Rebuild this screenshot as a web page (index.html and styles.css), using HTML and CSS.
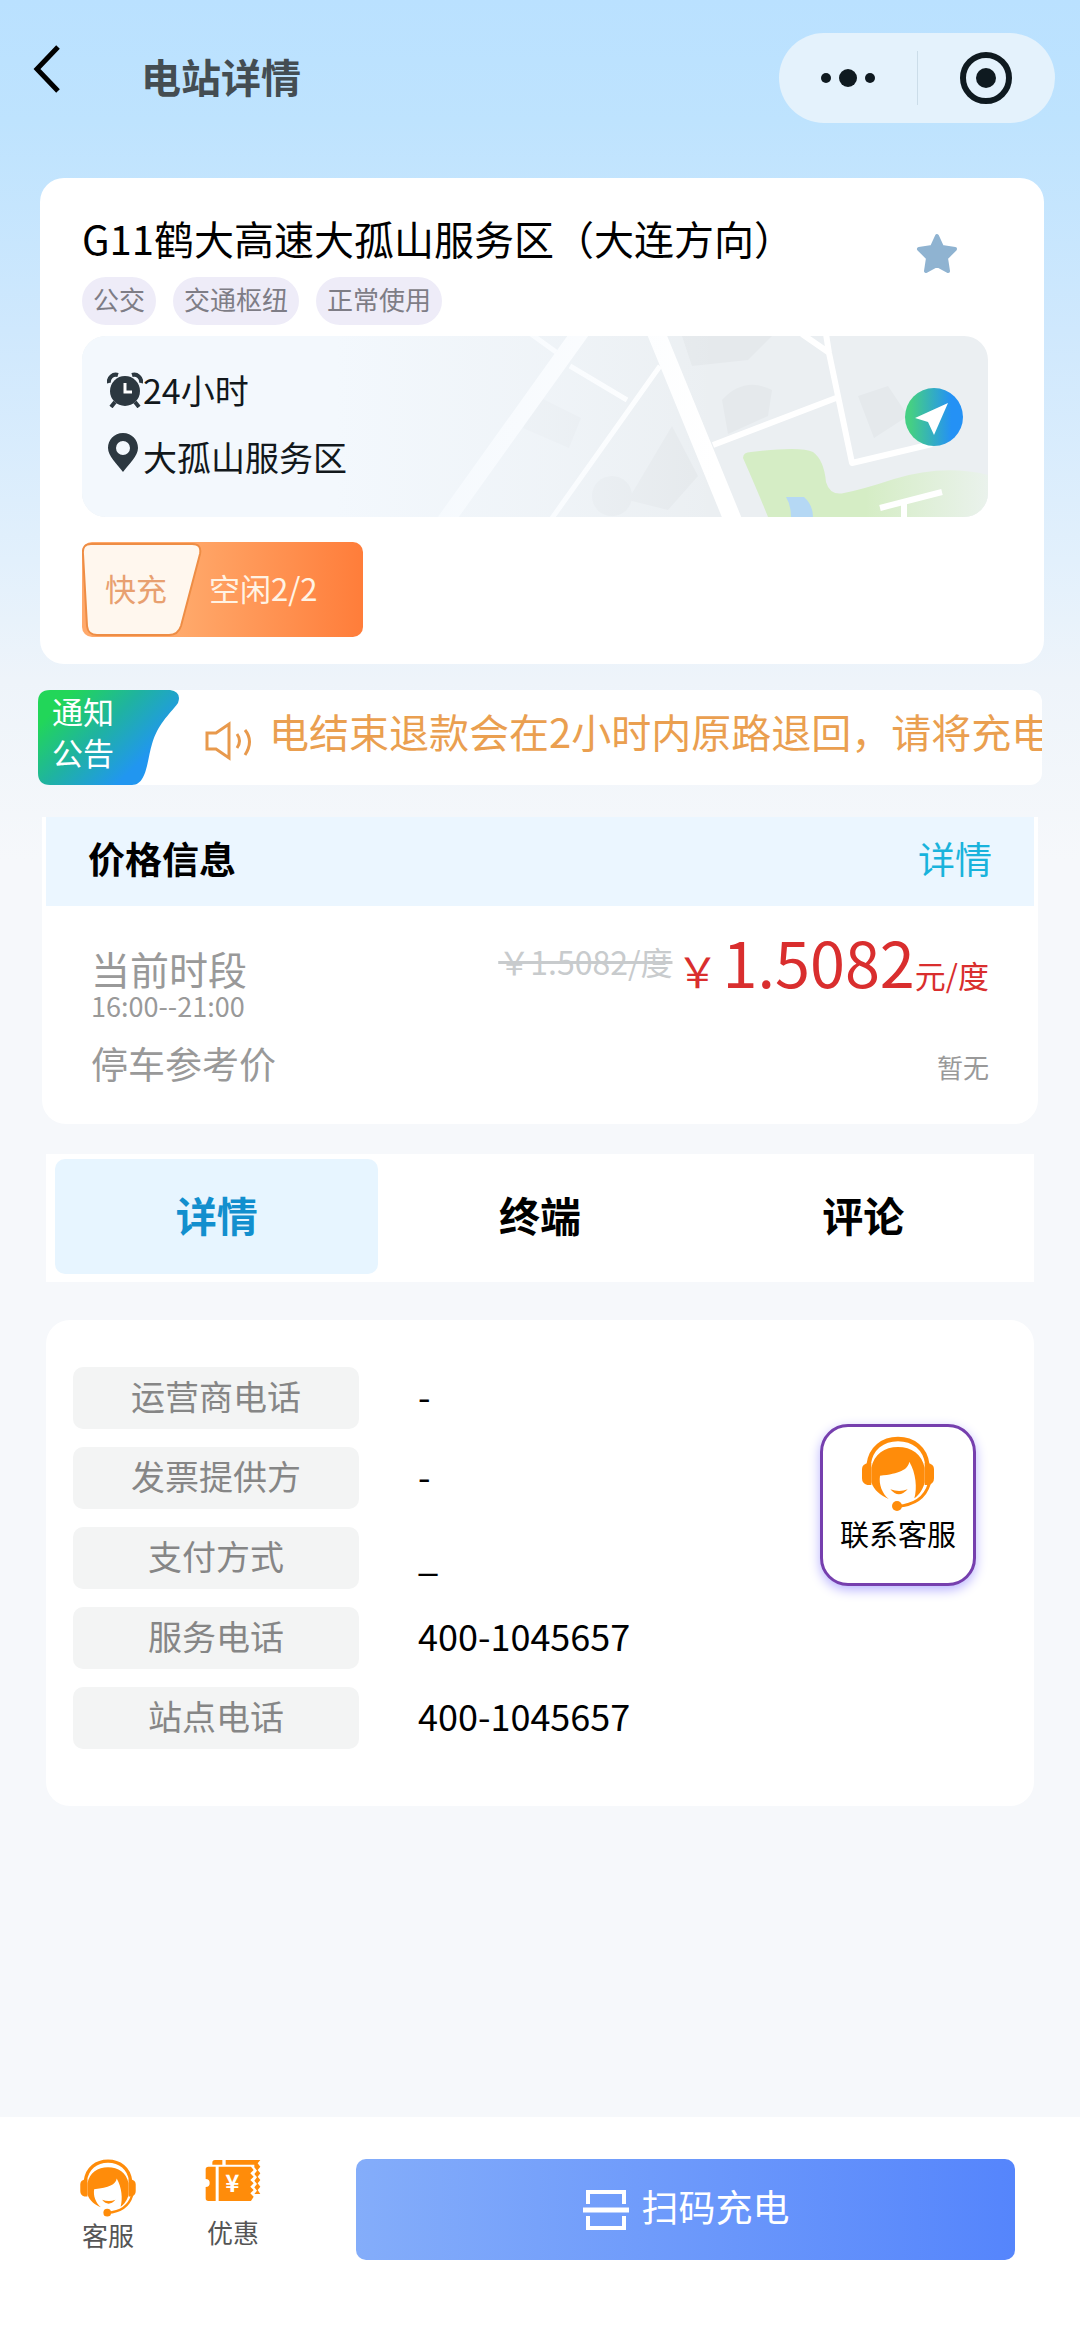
FILE: index.html
```html
<!DOCTYPE html>
<html lang="zh-CN">
<head>
<meta charset="utf-8">
<meta name="viewport" content="width=device-width, initial-scale=1">
<title>电站详情</title>
<link rel="stylesheet" href="styles.css">
</head>
<body>
<svg class="defs" aria-hidden="true">
  <symbol id="agent" viewBox="186 106 216 226">
    <path d="M206 190C212 142 248 114 294 114S376 142 382 190" fill="none" stroke="currentColor" stroke-width="13"/>
    <path d="M206 186h8v66h-12q-16-4-16-20v-28q0-15 20-18zM382 186h-8v66h12q16-4 16-20v-28q0-15-20-18z" fill="currentColor"/>
    <path d="M214 200C222 160 254 138 294 138S366 160 374 200V244C370 264 358 282 343 292C352 262 348 216 328 182C324 206 298 218 240 224C236 250 246 276 266 294C242 284 222 268 214 244z" fill="currentColor"/>
    <path d="M271 265q25 30 52 0q-25 10-52 0z" fill="currentColor"/>
    <path d="M388 248C376 288 348 312 292 316" fill="none" stroke="currentColor" stroke-width="9"/>
    <circle cx="291" cy="315" r="15" fill="currentColor"/>
  </symbol>
</svg>

<header class="topbar">
  <button class="back" type="button" aria-label="返回">
    <svg width="28" height="50" viewBox="0 0 28 50"><path d="M25 3L4 25L25 47" fill="none" stroke="#000" stroke-width="5"/></svg>
  </button>
  <h1 class="page-title">电站详情</h1>
  <div class="capsule">
    <button type="button" aria-label="更多">
      <svg width="56" height="20" viewBox="0 0 56 20" fill="#0f1a20"><circle cx="6" cy="10" r="5"/><circle cx="28" cy="10" r="9"/><circle cx="50" cy="10" r="5"/></svg>
    </button>
    <button type="button" aria-label="关闭">
      <svg width="54" height="54" viewBox="0 0 54 54"><circle cx="27" cy="27" r="23" fill="none" stroke="#0f1a20" stroke-width="6"/><circle cx="27" cy="27" r="10" fill="#0f1a20"/></svg>
    </button>
  </div>
</header>

<main class="content">
  <section class="card station">
    <div class="station-head">
      <div>
        <h2 class="station-name">G11鹤大高速大孤山服务区（大连方向）</h2>
        <ul class="tags"><li>公交</li><li>交通枢纽</li><li>正常使用</li></ul>
      </div>
      <button class="star" type="button" aria-label="收藏">
        <svg width="44" height="44" viewBox="0 0 44 44"><path d="M22 4L27 15L40 17L31 26L33 39L22 33L11 39L13 26L4 17L17 15z" fill="#8fb3d1" stroke="#8fb3d1" stroke-width="4" stroke-linejoin="round"/></svg>
      </button>
    </div>

    <div class="map">
      <svg class="map-art" viewBox="0 0 906 181" preserveAspectRatio="xMaxYMid slice" aria-hidden="true">
        <defs>
          <linearGradient id="fade"><stop offset="0.28" stop-color="#f3f8fd"/><stop offset="0.52" stop-color="#f3f8fd" stop-opacity="0.5"/><stop offset="0.7" stop-color="#f3f8fd" stop-opacity="0"/></linearGradient>
          <linearGradient id="park"><stop offset="0.5" stop-color="#d5edc5"/><stop offset="1" stop-color="#eaf2ec"/></linearGradient>
        </defs>
        <rect width="906" height="181" fill="#ebeff2"/>
        <g fill="#e5e9ec">
          <path d="M640 64q22-24 50-10l-4 26-40 18zM590 90l26 50-30 34-40-10zM776 60l30-10 20 30-34 22zM455 60l44 22-12 30-46-20zM600 0h90l-24 24-56 6z"/>
          <circle cx="530" cy="160" r="20"/>
        </g>
        <path d="M661 122q0-6 8-6q50-6 62 0q11 8 13 30q4 14 18 11q20-4 50-14q50-15 94-4v42H686q-10-25-25-59z" fill="url(#park)"/>
        <path d="M704 161h18q9 8 9 20h-22q0-12-5-20z" fill="#b5d8f4"/>
        <g fill="none" stroke="#fff" stroke-linejoin="round">
          <path d="M500-6L362 187" stroke-width="17"/>
          <path d="M573-6L652 187" stroke-width="18"/>
          <path d="M578 30L468 185M488 30L545 64M449-2L474 16" stroke-width="5"/>
          <path d="M744-2L747 17L770 127L850 108M720-2L746 16M754 62L631 109M798 172L860 156M822 166V184" stroke-width="6"/>
        </g>
        <rect width="906" height="181" fill="url(#fade)"/>
      </svg>
      <div class="map-info">
        <p><svg width="36" height="36" viewBox="0 0 36 36"><circle cx="18" cy="19" r="15" fill="#2c3840"/><path d="M2 11A7 7 0 0 1 11 3M34 11A7 7 0 0 0 25 3M8 30L4 35M28 30L32 35" fill="none" stroke="#2c3840" stroke-width="4"/><path d="M18 11V20H25" fill="none" stroke="#fff" stroke-width="3"/></svg>24小时</p>
        <p><svg width="36" height="40" viewBox="0 0 36 40"><path fill-rule="evenodd" d="M16 0C25 0 31 7 31 15C31 23 22 31 16 39C10 31 1 23 1 15C1 7 7 0 16 0zM16 8A7 7 0 1 0 16 22A7 7 0 1 0 16 8z" fill="#2c3840"/></svg>大孤山服务区</p>
      </div>
      <button class="nav" type="button" aria-label="导航">
        <svg width="58" height="58" viewBox="0 0 58 58"><defs><linearGradient id="ng"><stop offset="0.1" stop-color="#45cf84"/><stop offset="0.8" stop-color="#2491f5"/></linearGradient></defs><circle cx="29" cy="29" r="29" fill="url(#ng)"/><path d="M43 15L10 30L23 34L29 47z" fill="#fff"/></svg>
      </button>
    </div>

    <div class="badge">
      <span class="badge-type">
        <svg viewBox="0 0 120 95" preserveAspectRatio="none" aria-hidden="true"><path d="M9 2H110Q120 2 118 12L99 84Q96 93 87 93H15Q6 93 5 84L1 12Q0 2 9 2z" fill="#fff7ee" stroke="#ee8d45" stroke-width="2"/></svg>
        <b>快充</b>
      </span>
      <span class="badge-free">空闲2/2</span>
    </div>
  </section>

  <section class="notice">
    <div class="notice-tag">
      <svg viewBox="0 0 142 95" preserveAspectRatio="none" aria-hidden="true"><defs><linearGradient id="tg" x1="0" y1="0.2" x2="1" y2="0.9"><stop offset="0.08" stop-color="#22d659"/><stop offset="0.4" stop-color="#1fb3a0"/><stop offset="0.75" stop-color="#2196f0"/></linearGradient></defs><path d="M12 0H132Q144 2 140 13C130 26 120 34 114 54C109 70 109 95 94 95H12Q0 95 0 83V12Q0 0 12 0z" fill="url(#tg)"/></svg>
      <span>通知<br>公告</span>
    </div>
    <svg class="speaker" width="48" height="40" viewBox="0 0 48 40" fill="none" stroke="#e8994c" stroke-width="3"><path d="M2 12H11L24 3V37L11 28H2zM32 13Q37 20 32 27M40 9Q49 20 40 34"/></svg>
    <p class="notice-text">电结束退款会在2小时内原路退回，请将充电</p>
  </section>

  <section class="price">
    <div class="price-head"><h2>价格信息</h2><a href="#price">详情</a></div>
    <div class="price-row now">
      <div><p class="price-label period">当前时段</p><p class="hours">16:00--21:00</p></div>
      <p class="amount"><del>￥1.5082/度</del><span class="yen">￥</span><strong>1.5082</strong><span class="unit">元/度</span></p>
    </div>
    <div class="price-row"><p class="price-label">停车参考价</p><p class="none">暂无</p></div>
  </section>

  <nav class="tabs" aria-label="站点内容">
    <button class="active" type="button">详情</button>
    <button type="button">终端</button>
    <button type="button">评论</button>
  </nav>

  <section class="card details">
    <dl>
      <dt>运营商电话</dt><dd>-</dd>
      <dt>发票提供方</dt><dd>-</dd>
      <dt>支付方式</dt><dd>_</dd>
      <dt>服务电话</dt><dd>400-1045657</dd>
      <dt>站点电话</dt><dd>400-1045657</dd>
    </dl>
    <button class="contact" type="button"><svg width="72" height="76"><use href="#agent"/></svg>联系客服</button>
  </section>
</main>

<footer class="bottombar">
  <button class="shortcut" type="button"><svg width="56" height="58"><use href="#agent"/></svg>客服</button>
  <button class="shortcut" type="button">
    <svg class="ticket" width="56" height="43" viewBox="436 53 168 129">
      <g fill="currentColor">
        <path d="M466 56H488V70H458V64Q458 56 466 56zM498 56H602L594 66L602 76L594 86L602 96L594 106L602 116L594 126L602 136L594 146L602 158H584L592 148L584 138L592 128L584 118L592 108L584 98L592 88L584 78V70H498z"/>
        <path d="M446 76H468V179H446Q438 179 438 171V137A12 12 0 0 0 438 113V84Q438 76 446 76z"/>
        <path d="M477 76H574L582 86L572 96L582 106L572 116L582 126L572 136L582 146L572 156L582 166L574 179H477z"/>
      </g>
      <text x="518" y="152" text-anchor="middle" font-size="72" font-weight="700" fill="#fff">¥</text>
    </svg>优惠
  </button>
  <button class="scan" type="button">
    <svg width="48" height="42" viewBox="0 0 48 42" fill="none" stroke="#fff" stroke-width="4"><path d="M6 15V3H42V15M6 27V39H42V27"/><path d="M1 21H47" stroke-width="5"/></svg>
    <span>扫码充电</span>
  </button>
</footer>
</body>
</html>
```

FILE: styles.css
```css
* { box-sizing: border-box; }

body {
  margin: 0;
  min-height: 100vh;
  display: flex;
  flex-direction: column;
  font-family: "Noto Sans CJK SC", "Noto Sans", sans-serif;
  color: #000;
  background: #f6f8fb linear-gradient(#bae1ff 0, #bee3fe 120px, #cfe8fd 330px, #e2f0fc 560px, #eef4fa 680px, #f6f8fb 860px) no-repeat;
}

h1, h2, p, ul, dl, dd { margin: 0; padding: 0; }

button {
  padding: 0;
  border: 0;
  background: none;
  font: inherit;
  color: inherit;
}

svg { display: block; flex: none; }

.defs { position: absolute; width: 0; height: 0; }

/* top bar */
.topbar {
  display: flex;
  align-items: center;
  padding: 33px 25px 0 33px;
}

.back { width: 108px; padding-bottom: 18px; }

.page-title {
  flex: 1;
  padding-bottom: 4px;
  font-size: 40px;
  line-height: 48px;
  font-weight: 700;
  color: #444d52;
}

.capsule {
  display: flex;
  width: 276px;
  height: 90px;
  border-radius: 45px;
  background: #e4f2fc;
}

.capsule button {
  flex: 1;
  display: flex;
  align-items: center;
  justify-content: center;
  position: relative;
}

.capsule button + button::before {
  content: "";
  position: absolute;
  left: 0;
  top: 18px;
  bottom: 18px;
  width: 1px;
  background: #cbdde9;
}

.content { padding: 55px 46px 0; }

.card { background: #fff; border-radius: 24px; }

/* station */
.station {
  margin: 0 -10px 26px -6px;
  padding: 36px 56px 27px 42px;
}

.station-head {
  display: flex;
  justify-content: space-between;
  padding-right: 29px;
}

.station-name {
  font-size: 40px;
  line-height: 48px;
  font-weight: 400;
  white-space: nowrap;
}

.star { margin-top: 18px; align-self: flex-start; }

.tags {
  display: flex;
  gap: 17px;
  margin-top: 15px;
  list-style: none;
}

.tags li {
  padding: 0 11px 4px;
  border-radius: 24px;
  background: #eeecf8;
  color: #7e7d86;
  font-size: 26px;
  line-height: 44px;
}

.map {
  position: relative;
  display: flex;
  align-items: center;
  justify-content: space-between;
  margin: 11px 0 25px;
  padding: 22px 25px 28px;
  border-radius: 24px;
  overflow: hidden;
}

.map-art {
  position: absolute;
  inset: 0;
  width: 100%;
  height: 100%;
}

.map-info, .nav { position: relative; }

.map-info { display: grid; gap: 3px; }

.map-info p {
  display: flex;
  align-items: center;
  font-size: 34px;
  line-height: 64px;
  color: #12181c;
}

.map-info p + p svg { margin-bottom: 8px; }

.nav { margin-bottom: 14px; }

.badge {
  display: inline-flex;
  width: 281px;
  border-radius: 10px;
  background: linear-gradient(90deg, #ffa96b 35%, #ff7d3a);
  font-size: 31px;
  line-height: 91px;
  padding-bottom: 4px;
  vertical-align: top;
}

.badge-type { position: relative; width: 120px; padding-left: 23px; }

.badge-type svg { position: absolute; left: 0; top: 0; width: 100%; height: 95px; }

.badge-type b { position: relative; font-weight: 400; color: #e8a070; }

.badge-free { padding-left: 7px; color: #fff3e4; }

/* notice */
.notice {
  display: flex;
  align-items: center;
  margin: 0 -8px 32px;
  background: #fff;
  border-radius: 12px;
}

.notice-tag {
  position: relative;
  width: 142px;
  padding: 0 14px 13px;
  font-size: 31px;
  line-height: 41px;
  color: #fff;
}

.notice-tag svg { position: absolute; inset: 0; width: 100%; height: 100%; }

.notice-tag span { position: relative; }

.speaker { margin: 6px 16px 0 25px; }

.notice-text {
  flex: 1;
  min-width: 0;
  overflow: hidden;
  white-space: nowrap;
  padding-bottom: 14px;
  font-size: 40px;
  line-height: 60px;
  color: #ea9f50;
}

/* price */
.price {
  margin: 0 -4px 30px;
  padding: 0 4px 33px;
  background: #fff;
  border-radius: 0 0 24px 24px;
}

.price-head {
  display: flex;
  justify-content: space-between;
  padding: 13px 42px 20px;
  background: #ebf6ff;
  font-size: 37px;
  line-height: 56px;
}

.price-head h2 { font-size: 37px; font-weight: 700; }

.price-head a { color: #19b3dc; text-decoration: none; }

.price-row {
  display: flex;
  justify-content: space-between;
  padding: 0 45px;
}

.now { padding-top: 20px; margin-bottom: 9px; }

.price-label { font-size: 37px; line-height: 56px; color: #999; }

.period { padding-top: 18px; font-size: 39px; line-height: 48px; }

.hours { padding-bottom: 6px; font-size: 27px; line-height: 28px; color: #999; }

.amount {
  display: flex;
  align-items: baseline;
  line-height: 70px;
  color: #d92e2e;
}

.amount del { align-self: center; padding-bottom: 30px; font-size: 32px; line-height: 48px; color: #c8cbcd; }

.amount .yen { margin: 0 4px; font-size: 42px; }

.amount strong { font-size: 63px; font-weight: 400; }

.amount .unit { font-size: 31px; }

.none { padding-top: 8px; font-size: 26px; line-height: 48px; color: #999; }

/* tabs */
.tabs {
  display: flex;
  margin-bottom: 38px;
  padding: 5px 9px 8px;
  background: #fff;
}

.tabs button {
  flex: 1;
  padding-bottom: 5px;
  border-radius: 10px;
  font-size: 41px;
  line-height: 110px;
  font-weight: 700;
}

.tabs .active { background: #e7f5ff; color: #128fce; }

/* details */
.details {
  display: flex;
  justify-content: space-between;
  align-items: flex-start;
  padding: 47px 58px 57px 27px;
}

.details dl {
  display: grid;
  grid-template-columns: 286px auto;
  gap: 18px 59px;
}

.details dt {
  padding-bottom: 4px;
  border-radius: 10px;
  background: #f3f4f4;
  color: #868686;
  font-size: 34px;
  line-height: 58px;
  text-align: center;
}

.details dd { font-size: 36px; line-height: 56px; }

.contact {
  display: flex;
  flex-direction: column;
  align-items: center;
  width: 156px;
  margin-top: 57px;
  padding: 9px 0 29px;
  border: 3px solid #763fae;
  border-radius: 28px;
  background: #fff;
  box-shadow: 0 4px 12px #b9b4ff;
  font-size: 29px;
  line-height: 42px;
}

.contact svg, .shortcut svg { color: #ff8c0a; }

/* bottom bar */
.bottombar {
  display: flex;
  align-items: flex-start;
  margin-top: auto;
  padding: 42px 65px 72px 80px;
  background: #fff;
}

.shortcut {
  display: flex;
  flex-direction: column;
  align-items: center;
  width: 56px;
  margin-right: 69px;
  font-size: 26px;
  line-height: 36px;
  color: #555;
}

.shortcut .ticket { margin-bottom: 12px; }

.shortcut + .shortcut { margin-right: 95px; }

.scan {
  flex: 1;
  display: flex;
  align-items: center;
  justify-content: center;
  gap: 12px;
  height: 101px;
  border-radius: 10px;
  background: linear-gradient(90deg, #84adfa, #5585fc);
  color: #fff;
  font-size: 37px;
  line-height: 56px;
}

.scan span { padding-bottom: 8px; }
```
